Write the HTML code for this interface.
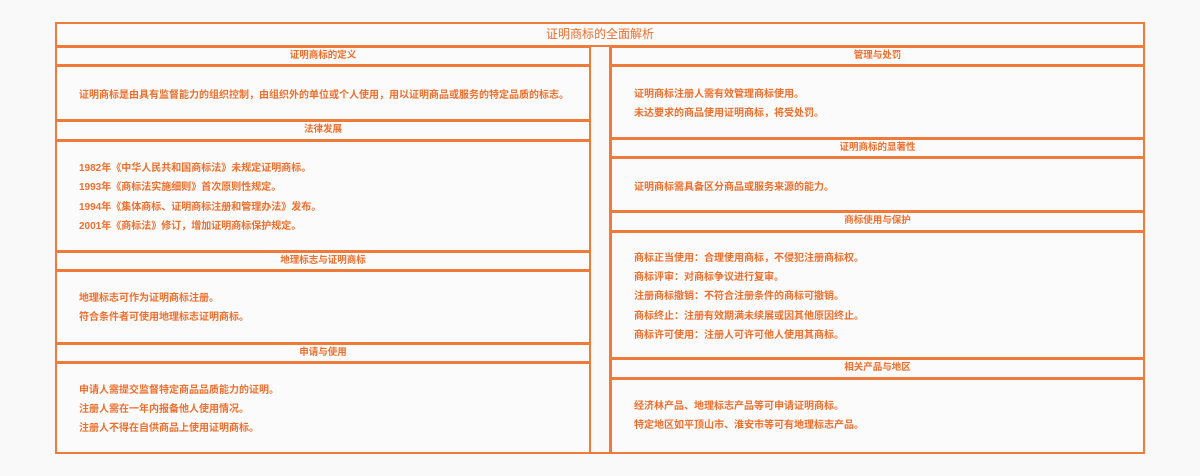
<!DOCTYPE html>
<html><head><meta charset="utf-8"><style>
body{margin:0;width:1200px;height:476px;background:#f9f9f9;position:relative;overflow:hidden;font-family:"Liberation Sans","Noto Sans CJK SC",sans-serif;color:#ee6f2d}
.b{position:absolute;border:2px solid #f07a3a;box-sizing:border-box;background:rgba(255,255,255,0.35)}
.h{font-size:9.5px;text-align:center;line-height:15px;font-weight:bold}
.t{position:absolute;font-size:10px;font-weight:bold;white-space:nowrap}
</style></head><body>
<div class="b" style="left:55px;top:22px;width:1090px;height:432px;background:transparent"></div>
<div class="b h" style="left:55px;top:22px;width:1090px;height:25px;line-height:21px;font-size:12px;font-weight:normal">证明商标的全面解析</div>
<div class="b" style="left:589px;top:46px;width:22px;height:408px;border-width:0 2px;background:transparent"></div>

<div class="b h" style="left:55px;top:46px;width:536px;height:20px">证明商标的定义</div>
<div class="b" style="left:55px;top:65px;width:536px;height:56px"></div>
<div class="t" style="left:79px;top:86px">证明商标是由具有监督能力的组织控制，由组织外的单位或个人使用，用以证明商品或服务的特定品质的标志。</div>
<div class="b h" style="left:55px;top:120px;width:536px;height:21px">法律发展</div>
<div class="b" style="left:55px;top:140px;width:536px;height:112px"></div>
<div class="t" style="left:79px;top:159px;line-height:19.3px">1982年《中华人民共和国商标法》未规定证明商标。<br>1993年《商标法实施细则》首次原则性规定。<br>1994年《集体商标、证明商标注册和管理办法》发布。<br>2001年《商标法》修订，增加证明商标保护规定。</div>
<div class="b h" style="left:55px;top:251px;width:536px;height:20px">地理标志与证明商标</div>
<div class="b" style="left:55px;top:270px;width:536px;height:74px"></div>
<div class="t" style="left:79px;top:289px;line-height:19px">地理标志可作为证明商标注册。<br>符合条件者可使用地理标志证明商标。</div>
<div class="b h" style="left:55px;top:343px;width:536px;height:20px">申请与使用</div>
<div class="b" style="left:55px;top:362px;width:536px;height:92px"></div>
<div class="t" style="left:79px;top:381px;line-height:19px">申请人需提交监督特定商品品质能力的证明。<br>注册人需在一年内报备他人使用情况。<br>注册人不得在自供商品上使用证明商标。</div>

<div class="b h" style="left:610px;top:46px;width:535px;height:20px">管理与处罚</div>
<div class="b" style="left:610px;top:65px;width:535px;height:74px"></div>
<div class="t" style="left:634px;top:85px;line-height:19px">证明商标注册人需有效管理商标使用。<br>未达要求的商品使用证明商标，将受处罚。</div>
<div class="b h" style="left:610px;top:138px;width:535px;height:20px">证明商标的显著性</div>
<div class="b" style="left:610px;top:157px;width:535px;height:55px"></div>
<div class="t" style="left:634px;top:178px">证明商标需具备区分商品或服务来源的能力。</div>
<div class="b h" style="left:610px;top:211px;width:535px;height:21px">商标使用与保护</div>
<div class="b" style="left:610px;top:231px;width:535px;height:128px"></div>
<div class="t" style="left:634px;top:249px;line-height:19.2px">商标正当使用：合理使用商标，不侵犯注册商标权。<br>商标评审：对商标争议进行复审。<br>注册商标撤销：不符合注册条件的商标可撤销。<br>商标终止：注册有效期满未续展或因其他原因终止。<br>商标许可使用：注册人可许可他人使用其商标。</div>
<div class="b h" style="left:610px;top:358px;width:535px;height:21px">相关产品与地区</div>
<div class="b" style="left:610px;top:378px;width:535px;height:76px"></div>
<div class="t" style="left:634px;top:397px;line-height:19px">经济林产品、地理标志产品等可申请证明商标。<br>特定地区如平顶山市、淮安市等可有地理标志产品。</div>
</body></html>
